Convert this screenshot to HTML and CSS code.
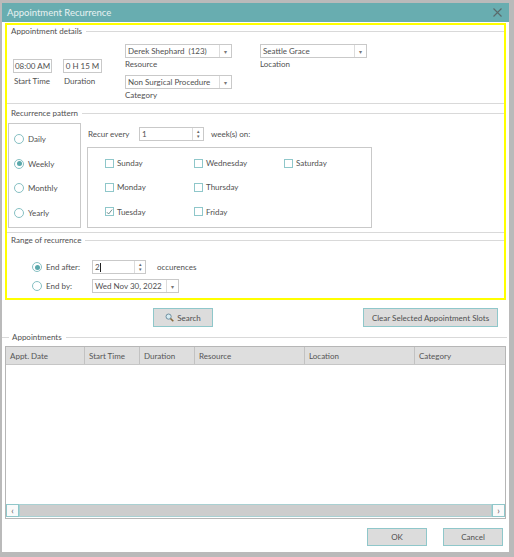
FILE: index.html
```html
<!DOCTYPE html>
<html lang="en">
<head>
  <meta charset="UTF-8" />
  <meta name="viewport" content="width=device-width, initial-scale=1.0"/>
  <title>Appointment Recurrence</title>
  <link rel="stylesheet" href="styles.css">
</head>

<body>
  <div class="dialog">
    <div class="titlebar">
      <span>Appointment Recurrence</span>
      <svg class="close" width="9" height="9" viewBox="0 0 9 9">
        <path d="M0.5 0.5 L8.5 8.5 M8.5 0.5 L0.5 8.5" stroke="#5a6a6b" stroke-width="1.1"/>
      </svg>
    </div>

    <div class="highlight">
      <!-- Appointment details -->
      <section class="group details-group">
        <div class="group-title">Appointment details</div>
        <div class="details">
          <div class="field time-field">
            <div class="textbox">08:00 AM</div>
            <span class="caption">Start Time</span>
          </div>
          <div class="field time-field">
            <div class="textbox">0 H 15 M</div>
            <span class="caption">Duration</span>
          </div>
          <div class="stack">
            <div class="field">
              <div class="combo"><span class="combo-text">Derek Shephard&nbsp; (123)</span><span class="drop">&#9662;</span></div>
              <span class="caption">Resource</span>
            </div>
            <div class="field">
              <div class="combo"><span class="combo-text">Non Surgical Procedure</span><span class="drop">&#9662;</span></div>
              <span class="caption">Category</span>
            </div>
          </div>
          <div class="field">
            <div class="combo"><span class="combo-text">Seattle Grace</span><span class="drop">&#9662;</span></div>
            <span class="caption">Location</span>
          </div>
        </div>
      </section>

      <!-- Recurrence pattern -->
      <section class="group pattern-group">
        <div class="group-title">Recurrence pattern</div>
        <div class="pattern">
          <div class="freq-box">
            <label class="radio-row"><span class="radio"></span>Daily</label>
            <label class="radio-row"><span class="radio checked"></span>Weekly</label>
            <label class="radio-row"><span class="radio"></span>Monthly</label>
            <label class="radio-row"><span class="radio"></span>Yearly</label>
          </div>
          <div class="weekly">
            <div class="recur-row">
              <span class="recur-label">Recur every</span>
              <div class="spin recur-spin">
                <span class="spin-text">1</span>
                <span class="spin-btns"><i>&#9652;</i><i>&#9662;</i></span>
              </div>
              <span class="weeks-label">week(s) on:</span>
            </div>
            <div class="days">
              <label class="check-row"><span class="check"></span>Sunday</label>
              <label class="check-row"><span class="check"></span>Wednesday</label>
              <label class="check-row"><span class="check"></span>Saturday</label>
              <label class="check-row"><span class="check"></span>Monday</label>
              <label class="check-row"><span class="check"></span>Thursday</label>
              <span></span>
              <label class="check-row"><span class="check checked">
                <svg width="8" height="8" viewBox="0 0 8 8"><path d="M1 4.2 L3 6.3 L7 1.2" fill="none" stroke="#5f7f80" stroke-width="1"/></svg>
              </span>Tuesday</label>
              <label class="check-row"><span class="check"></span>Friday</label>
            </div>
          </div>
        </div>
      </section>

      <!-- Range of recurrence -->
      <section class="group range-group">
        <div class="group-title">Range of recurrence</div>
        <div class="range">
          <label class="radio-row"><span class="radio checked"></span>End after:</label>
          <div class="range-value">
            <div class="spin count-spin">
              <span class="spin-text">2<span class="caret"></span></span>
              <span class="spin-btns"><i>&#9652;</i><i>&#9662;</i></span>
            </div>
            <span class="occ-label">occurences</span>
          </div>
          <label class="radio-row"><span class="radio"></span>End by:</label>
          <div class="range-value">
            <div class="combo date-combo"><span class="combo-text">Wed Nov 30, 2022</span><span class="drop">&#9662;</span></div>
          </div>
        </div>
      </section>
    </div>

    <div class="action-row">
      <button class="btn search-btn">
        <svg width="9" height="9" viewBox="0 0 9 9">
          <circle cx="3.6" cy="3.6" r="2.6" fill="#d6ebf2" stroke="#6f8fa0" stroke-width="1"/>
          <path d="M5.5 5.5 L8.3 8.3" stroke="#8a6a3c" stroke-width="1.6"/>
        </svg>
        Search
      </button>
      <button class="btn clear-btn">Clear Selected Appointment Slots</button>
    </div>

    <div class="group-title appts-title">Appointments</div>
    <div class="grid">
      <div class="grid-head">
        <span class="col-date">Appt. Date</span>
        <span class="col-start">Start Time</span>
        <span class="col-dur">Duration</span>
        <span class="col-res">Resource</span>
        <span class="col-loc">Location</span>
        <span class="col-cat">Category</span>
      </div>
      <div class="grid-body"></div>
      <div class="hscroll">
        <span class="sb-btn">&#8249;</span>
        <span class="sb-thumb"></span>
        <span class="sb-btn">&#8250;</span>
      </div>
    </div>

    <div class="footer">
      <button class="btn ok-btn">OK</button>
      <button class="btn cancel-btn">Cancel</button>
    </div>
  </div>
</body>
</html>
```

FILE: styles.css
```css
:root {
  --teal: #68adb0;
  --teal-border: #8fc7ca;
  --line: #d9d9d9;
  --box-border: #c9c9c9;
  --text: #505050;
  --button: #dcdcdc;
}

* {
  box-sizing: border-box;
}

body {
  margin: 0;
  background: #bababa;
  font-family: Lato, "Liberation Sans", sans-serif;
  font-size: 8px;
  color: var(--text);
}

.dialog {
  margin: 3px 0 0 2px;
  width: 507px;
  height: 549px;
  background: #fff;
  display: flex;
  flex-direction: column;
}

.titlebar {
  height: 19px;
  flex: none;
  background: var(--teal);
  color: #e8f2f2;
  font-size: 9.5px;
  display: flex;
  align-items: center;
  justify-content: space-between;
  padding: 0 7px 0 5px;
}

.highlight {
  margin: 1px 3px 0 3px;
  height: 277px;
  flex: none;
  border: 2px solid #ffff00;
}

/* group box header: caption with a rule running to the right */
.group-title {
  height: 12px;
  display: flex;
  align-items: center;
  white-space: nowrap;
}

.group-title::before {
  content: "";
  width: 3px;
  margin-right: 1px;
}

.group-title::after {
  content: "";
  flex: 1;
  border-top: 1px solid var(--line);
  margin-left: 4px;
}

.group {
  border-bottom: 1px solid var(--line);
}

.range-group {
  border-bottom: none;
}

.pattern-group {
  margin-top: 3px;
  padding-bottom: 4px;
}

.range-group {
  margin-top: 1px;
}

/* inputs */
.textbox,
.combo,
.spin {
  height: 14px;
  border: 1px solid var(--box-border);
  background: #fff;
  display: flex;
  align-items: center;
  white-space: nowrap;
}

.textbox {
  padding: 0 2px;
}

.combo-text,
.spin-text {
  flex: 1;
  padding-left: 2px;
  overflow: hidden;
}

.drop {
  width: 12px;
  height: 100%;
  border-left: 1px solid #dcdcdc;
  display: flex;
  align-items: center;
  justify-content: center;
  font-size: 6px;
  color: #777;
}

.spin-btns {
  width: 11px;
  height: 100%;
  border-left: 1px solid #dcdcdc;
  display: flex;
  flex-direction: column;
  align-items: center;
  justify-content: center;
  font-size: 5px;
  line-height: 5px;
  color: #666;
}

.spin-btns i {
  font-style: normal;
}

.caption {
  display: block;
  line-height: 10px;
  margin-top: 1px;
}

/* appointment details */
.details {
  display: grid;
  grid-template-columns: 50px 62px 135px 107px;
  padding-left: 6px;
  margin-top: 7px;
  height: 59px;
}

.time-field {
  margin-top: 15px;
}

.time-field .textbox {
  width: 39px;
  justify-content: center;
  padding: 0;
}

.time-field .caption {
  margin-top: 3px;
  padding-left: 1px;
}

.stack {
  display: flex;
  flex-direction: column;
  gap: 6px;
}

.stack .combo,
.details > .field .combo {
  width: 107px;
}

/* recurrence pattern */
.pattern {
  display: flex;
  margin-top: 4px;
  padding-left: 1px;
  height: 105px;
}

.freq-box {
  width: 73px;
  height: 105px;
  border: 1px solid var(--box-border);
  display: flex;
  flex-direction: column;
  gap: 12.6px;
  padding: 9px 0 0 5px;
}

.radio-row,
.check-row {
  display: flex;
  align-items: center;
  height: 12px;
  white-space: nowrap;
}

.radio {
  width: 10px;
  height: 10px;
  border: 1px solid #86c0c3;
  border-radius: 50%;
  margin-right: 4px;
  display: flex;
  align-items: center;
  justify-content: center;
  background: #fff;
}

.radio.checked::after {
  content: "";
  width: 5px;
  height: 5px;
  border-radius: 50%;
  background: #5aa8ab;
}

.weekly {
  margin-left: 6px;
}

.recur-row {
  display: flex;
  align-items: center;
  margin-top: 4px;
  height: 14px;
}

.recur-label {
  width: 52px;
  padding-left: 1px;
}

.recur-spin {
  width: 65px;
}

.weeks-label {
  margin-left: 7px;
}

.days {
  width: 285px;
  height: 81px;
  margin-top: 6px;
  border: 1px solid var(--box-border);
  display: grid;
  grid-template-columns: 89px 90px 1fr;
  grid-auto-rows: 12px;
  row-gap: 12.4px;
  padding: 9px 0 0 17px;
}

.check {
  width: 9px;
  height: 9px;
  border: 1px solid var(--teal-border);
  margin-right: 3px;
  display: flex;
  align-items: center;
  justify-content: center;
}

/* range of recurrence */
.range {
  display: grid;
  grid-template-columns: 60px 1fr;
  grid-auto-rows: 14px;
  row-gap: 5px;
  align-items: center;
  margin-top: 14px;
  padding-left: 25px;
}

.range-value {
  display: flex;
  align-items: center;
}

.count-spin {
  width: 54px;
}

.caret {
  display: inline-block;
  width: 1px;
  height: 9px;
  background: #222;
  vertical-align: middle;
}

.occ-label {
  margin-left: 11px;
}

.date-combo {
  width: 87px;
}

/* buttons */
.btn {
  font-family: inherit;
  font-size: 8px;
  color: var(--text);
  background: var(--button);
  border: 1px solid var(--teal-border);
  padding: 0;
  display: flex;
  align-items: center;
  justify-content: center;
  gap: 3px;
}

.action-row {
  display: flex;
  margin-top: 8px;
  height: 19px;
  flex: none;
}

.search-btn {
  width: 60px;
  margin-left: 151px;
}

.clear-btn {
  width: 135px;
  margin-left: auto;
  margin-right: 11px;
}

.appts-title {
  margin-top: 4px;
  flex: none;
}

.appts-title::before {
  width: 7px;
  border-top: 1px solid var(--line);
  margin-right: 3px;
}

.appts-title::after {
  margin-right: 2px;
}

/* appointments grid */
.grid {
  margin: 3px 3px 0 3px;
  height: 173px;
  flex: none;
  border: 1px solid #b6b6b6;
  display: flex;
  flex-direction: column;
}

.grid-head {
  display: grid;
  grid-template-columns: 79px 55px 55px 110px 110px 1fr;
  height: 18px;
  background: #dedede;
  border-bottom: 1px solid #c6c6c6;
}

.grid-head span {
  display: flex;
  align-items: center;
  padding-left: 4px;
  border-right: 1px solid #c2c2c2;
  color: #555;
}

.grid-head span:last-child {
  border-right: none;
}

.grid-body {
  flex: 1;
}

.hscroll {
  height: 13px;
  display: flex;
  background: #d0d0d0;
  margin-bottom: 1px;
}

.sb-btn {
  width: 13px;
  border: 1px solid var(--teal-border);
  background: #fafafa;
  display: flex;
  align-items: center;
  justify-content: center;
  font-size: 9px;
  line-height: 9px;
  color: #555;
}

.sb-thumb {
  flex: 1;
  border: 1px solid #a9d0d2;
  background: #cdcdcd;
}

.footer {
  display: flex;
  justify-content: flex-end;
  gap: 16px;
  margin-top: 9px;
  padding-right: 6px;
  height: 18px;
  flex: none;
}

.ok-btn,
.cancel-btn {
  width: 60px;
}
```
